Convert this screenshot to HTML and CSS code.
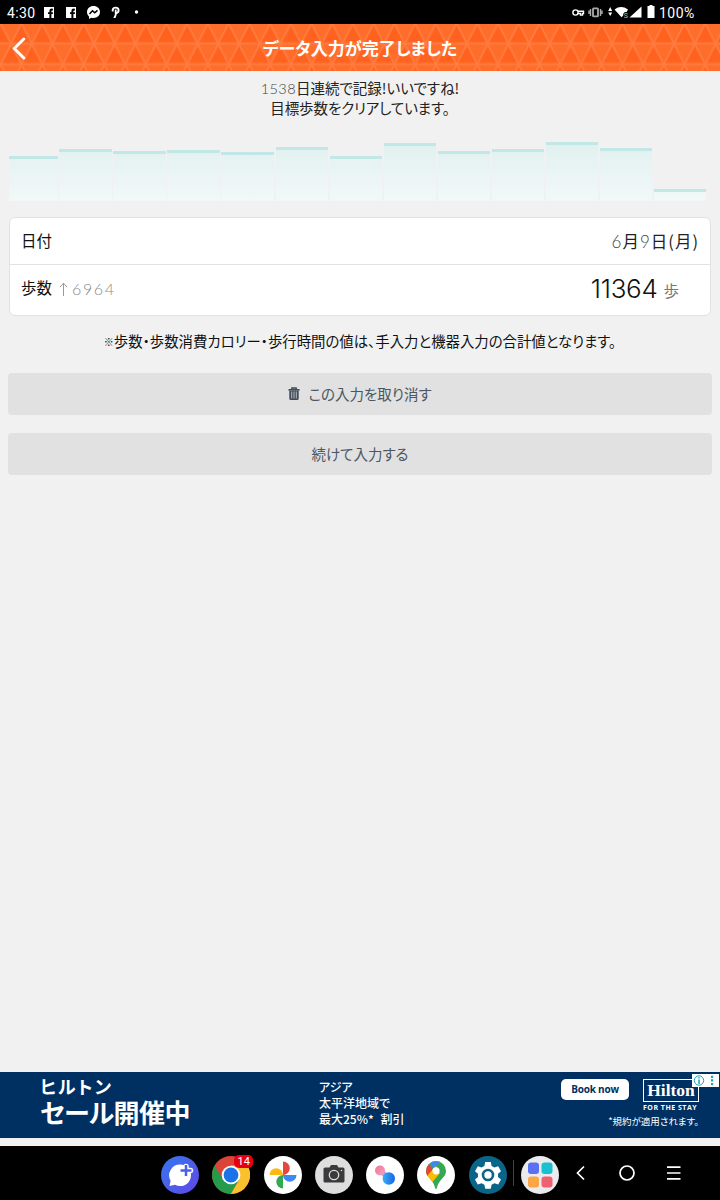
FILE: index.html
```html
<!DOCTYPE html>
<html lang="ja">
<head>
  <meta charset="utf-8">
  <title>データ入力が完了しました</title>
  <link rel="stylesheet" href="styles.css">
</head>
<body>
  <div class="statusbar">
    <span class="clock">4:30</span>
    <svg class="notices" width="100" height="24" viewBox="0 0 100 24">
      <g fill="#fff">
        <path d="M1 7h10v11H8.400v-4h1.500v-1.800H8.400v-1q0-.9 1.500-.8V8.700q-3.500-.5-3.500 2v1.500H5V14h1.400v4H1z"/>
        <path d="M23 7h10v11h-2.600v-4h1.500v-1.800h-1.500v-1q0-.9 1.500-.8V8.700q-3.500-.5-3.500 2v1.500H27V14h1.400v4H23z"/>
        <path d="M50.500 6c-3.700 0-6.500 2.600-6.500 6 0 1.900.8 3.300 2 4.400V19l2.200-1.300c4.800 1.200 8.800-1.600 8.800-5.700 0-3.400-2.800-6-6.500-6z"/>
        <circle cx="93.500" cy="12" r="1.700"/>
      </g>
      <path d="M46.500 14l3-3.200 2.200 2 2.800-2.400" fill="none" stroke="#000" stroke-width="1.500"/>
      <path d="M69.700 11.500V9.800q.3-2.200 3-2.200 2.900 0 2.900 2.700 0 2.800-3 2.900" fill="none" stroke="#fff" stroke-width="1.900"/>
      <path d="M71.800 9.500h1.800V15l-1.100 3h-2.200l1.500-3.200z" fill="#fff"/>
    </svg>
    <svg class="signals" width="86" height="24" viewBox="0 0 86 24">
      <g fill="none" stroke="#fff" stroke-width="1.400">
        <circle cx="4.500" cy="12.500" r="2.600"/>
        <path d="M7 11.300h5.500v2.200h-1v1.600h-2v-1.600H7"/>
      </g>
      <g fill="none" stroke="#aaa">
        <rect x="22" y="8.300" width="5" height="8" rx=".6" stroke-width="1.800"/>
        <path d="M19.500 9v7M29.500 9v7M31 10.500v3.500M18 10.500v3.500" stroke-width="1.400"/>
      </g>
      <path d="M37.200 11l2-4 2 4zM37.200 12.500h4l-2 3.600z" fill="#fff"/>
      <path d="M43.500 9.500q6.500-4.800 13.500 0l-1.500 2.500q-3.500-.5-3.300 3.500l-1.700 1.700z" fill="#fff"/>
      <text class="wifi-mark" x="52.800" y="17.500">S</text>
      <path d="M58.500 17.500l12-11v11z" fill="#fff"/>
      <path d="M76.500 6h2V5h3v1h2v12h-7z" fill="#fff"/>
    </svg>
    <span class="percent">100%</span>
  </div>

  <div class="header">
    <svg class="pattern" width="720" height="47">
      <defs>
        <pattern id="triangles" x="31.800" y="-1" width="20.720" height="41.400" patternUnits="userSpaceOnUse">
          <rect width="20.720" height="41.400" fill="#ff6d2b"/>
          <path d="M2 18.500L10.400 3.800l8.300 14.700z" fill="#ff611e"/>
          <path d="M0 24l8.300 15.200H0zM20.700 24l-8.300 15.200h8.300z" fill="#ff621f"/>
          <path d="M0 20.700h21M0 0h21M0 41.400h21M0 20.700L10.400 0l10.300 20.700-10.300 20.700z" fill="none" stroke="#ff7d42" stroke-width="1.500"/>
        </pattern>
      </defs>
      <rect width="720" height="47" fill="url(#triangles)"/>
    </svg>
    <svg class="back" width="16" height="24" viewBox="0 0 16 24">
      <path d="M12.800 3L3.300 12.500l9.500 9.500" fill="none" stroke="#fff" stroke-width="3" stroke-linecap="round" stroke-linejoin="round"/>
    </svg>
    <h1>データ入力が完了しました</h1>
  </div>

  <div class="message">
    <p><span class="num">1538</span>日連続で記録!いいですね!</p>
    <p class="goal">目標歩数をクリアしています。</p>
  </div>

  <div class="chart">
    <div class="bar first" style="height:45px"></div>
    <div class="bar" style="height:52px"></div>
    <div class="bar" style="height:50px"></div>
    <div class="bar" style="height:51px"></div>
    <div class="bar" style="height:49px"></div>
    <div class="bar" style="height:54px"></div>
    <div class="bar" style="height:45px"></div>
    <div class="bar" style="height:58px"></div>
    <div class="bar" style="height:50px"></div>
    <div class="bar" style="height:52px"></div>
    <div class="bar" style="height:59px"></div>
    <div class="bar" style="height:53px"></div>
    <div class="bar" style="height:12px"></div>
  </div>

  <div class="card">
    <div class="row">
      <span class="label">日付</span>
      <span class="date"><span class="num">6</span>月<span class="num">9</span>日(月)</span>
    </div>
    <div class="row steps">
      <span class="label">歩数</span>
      <svg class="up" width="9" height="15" viewBox="0 0 9 15">
        <path d="M4.500 14V1.200M1 5l3.500-3.800L8 5" fill="none" stroke="#999"/>
      </svg>
      <span class="diff">6964</span>
      <span class="count">11364</span>
      <span class="unit">歩</span>
    </div>
  </div>

  <p class="note"><span class="mark">※</span>歩数・歩数消費カロリー・歩行時間の値は、手入力と機器入力の合計値となります。</p>

  <div class="button">
    <svg class="trash" width="12" height="14" viewBox="0 0 12 14">
      <path d="M3.800 2V1h4.400v1" fill="none" stroke="#3f4b57" stroke-width="1.300"/>
      <path d="M.5 2h11v1.700H.5zM1.300 4h9.400v7.500q0 1.500-1.500 1.500H2.800q-1.500 0-1.500-1.500z" fill="#3f4b57"/>
      <path d="M3.700 4.500v7M6 4.500v7M8.300 4.500v7" stroke="#c5c9cc" stroke-width=".9"/>
    </svg>
    <span class="cancel">この入力を取り消す</span>
  </div>
  <div class="button"><span class="again">続けて入力する</span></div>

  <div class="ad">
    <div class="ad-title">
      <p class="brand">ヒルトン</p>
      <p class="sale">セール開催中</p>
    </div>
    <div class="ad-text">
      <p>アジア</p>
      <p>太平洋地域で</p>
      <p>最大25%* <span class="off">割引</span></p>
    </div>
    <div class="ad-side">
      <div class="ad-top">
        <span class="book">Book now</span>
        <div class="logo">
          <span class="hilton">Hilton</span>
          <span class="stay">FOR THE STAY</span>
        </div>
      </div>
      <p class="terms">*規約が適用されます。</p>
    </div>
    <svg class="adchoices" width="27" height="13" viewBox="0 0 27 13">
      <path d="M0 0h27v13H0z" fill="#fff"/>
      <g fill="#16a6bd">
        <circle cx="7" cy="6.500" r="4.700" fill="none" stroke="#16a6bd"/>
        <path d="M6.300 5.500h1.500V10H6.300zM6.300 3.200h1.500v1.400H6.300zM19 1.800h2.200V4H19zM19 5.300h2.200v2.200H19zM19 9h2.200v2.200H19z"/>
      </g>
    </svg>
  </div>

  <div class="dock">
    <div class="apps">
      <svg width="38" height="38" viewBox="0 0 38 38">
        <defs><linearGradient id="msg" x2="1" y2="1"><stop stop-color="#3478ee"/><stop offset="1" stop-color="#6246e5"/></linearGradient></defs>
        <circle cx="19" cy="19" r="19" fill="url(#msg)"/>
        <path d="M19 8.500a10.800 10.800 0 0 0-9.400 16.200L8.500 30l5.600-1.200A10.800 10.800 0 1 0 19 8.500z" fill="#fff"/>
        <path d="M25 10.500v9M20.500 14.500h9" stroke="#fff" stroke-width="5.500" stroke-linecap="round"/>
        <path d="M25 9v11M19.500 14.500h11" stroke="#4960e8" stroke-width="2.500"/>
      </svg>
      <div class="chrome">
        <svg width="38" height="38" viewBox="0 0 38 38">
          <circle cx="19" cy="19" r="19" fill="#db4437"/>
          <path d="M2.600 9.500A19 19 0 0 0 18.800 38l8.300-14.200L19 19l-8 4.600z" fill="#259b4b"/>
          <path d="M35.500 9.500A19 19 0 0 1 18.800 38l8.400-14.300L19 9.500z" fill="#fbc02d"/>
          <circle cx="19" cy="19" r="9.300" fill="#fff"/>
          <circle cx="19" cy="19" r="7.400" fill="#1a73e8"/>
        </svg>
        <span class="badge">14</span>
      </div>
      <svg width="38" height="38" viewBox="0 0 38 38">
        <circle cx="19" cy="19" r="19" fill="#fff"/>
        <path d="M19 5.500a6.700 6.700 0 0 1 0 13.500z" fill="#e8453c"/>
        <path d="M32.500 19A6.700 6.700 0 0 1 19 19z" fill="#4285f4"/>
        <path d="M19 32.500A6.700 6.700 0 0 1 19 19z" fill="#34a853"/>
        <path d="M5.500 19A6.700 6.700 0 0 1 19 19z" fill="#fbb915"/>
      </svg>
      <svg width="38" height="38" viewBox="0 0 38 38">
        <circle cx="19" cy="19" r="19" fill="#dedede"/>
        <path d="M10 11.500h4.500L16 9h6l1.500 2.500H28q1.500 0 1.500 1.500v12q0 1.500-1.500 1.500H10q-1.500 0-1.500-1.500V13q0-1.500 1.500-1.500z" fill="#3a3a3c"/>
        <circle cx="19" cy="19" r="4.700" fill="none" stroke="#ddd" stroke-width="1.300"/>
        <circle cx="26.500" cy="14.500" r=".8" fill="#ddd"/>
      </svg>
      <svg width="38" height="38" viewBox="0 0 38 38">
        <defs>
          <linearGradient id="pink" x2="1" y2="1"><stop stop-color="#f0758f"/><stop offset="1" stop-color="#f2a3c6"/></linearGradient>
          <linearGradient id="blue"><stop stop-color="#3caef2"/><stop offset="1" stop-color="#1465e8"/></linearGradient>
        </defs>
        <circle cx="19" cy="19" r="19" fill="#fff"/>
        <path d="M18.500 14l-3 5 4 4 5-6q-5 1-6-3z" fill="#b59ade"/>
        <circle cx="14" cy="14.500" r="5" fill="url(#pink)"/>
        <circle cx="22.800" cy="22.500" r="6.200" fill="url(#blue)"/>
      </svg>
      <svg width="38" height="38" viewBox="0 0 38 38">
        <defs><clipPath id="pin"><path d="M19 5a10 10 0 0 0-10 10c0 6.500 7 8 9 16.500q1 3 2 0C22 23 29 21.500 29 15A10 10 0 0 0 19 5z"/></clipPath></defs>
        <circle cx="19" cy="19" r="19" fill="#fff"/>
        <g clip-path="url(#pin)">
          <path d="M0 0h38v38H0z" fill="#34a853"/>
          <path d="M8 21.500L30-1H14l-3 7 8 8z" fill="#4285f4"/>
          <path d="M5 5l6 2 6 8-8 7z" fill="#ea4335"/>
          <path d="M8 22l11-12 4 7-10 12z" fill="#fbbc04"/>
        </g>
        <circle cx="19" cy="14.800" r="3.600" fill="#fff"/>
      </svg>
      <svg width="38" height="38" viewBox="0 0 38 38">
        <circle cx="19" cy="19" r="19" fill="#0b6588"/>
        <path d="M16.200 6h5.600l.8 4 2.800 1.600 3.800-1.300 2.800 4.900-3 2.600v3.200l3 2.600-2.800 4.900-3.800-1.300-2.800 1.600-.8 4h-5.600l-.8-4-2.800-1.600-3.800 1.300L6 23.600 9 21v-3.200l-3-2.600 2.800-4.900 3.800 1.300 2.800-1.600z" fill="#fff"/>
        <circle cx="19" cy="19" r="5" fill="#fff" stroke="#0b6588" stroke-width="2.600"/>
      </svg>
    </div>
    <div class="divider"></div>
    <svg class="drawer" width="38" height="38" viewBox="0 0 38 38">
      <circle cx="19" cy="19" r="19" fill="#ebebee"/>
      <rect x="7" y="6.500" width="11" height="11.500" rx="3" fill="#5c70f4"/>
      <rect x="20.500" y="6.500" width="11" height="11.500" rx="3" fill="#1bc0d0"/>
      <rect x="7" y="20.500" width="11" height="11" rx="3" fill="#fca744"/>
      <rect x="20.500" y="20.500" width="11" height="11" rx="3" fill="#ef6070"/>
    </svg>
    <svg class="nav" width="110" height="20" viewBox="0 0 110 20">
      <g fill="none" stroke="#fff" stroke-width="1.700">
        <path d="M8 3.500L1.500 10 8 16.500"/>
        <circle cx="51" cy="10" r="7"/>
        <path d="M91 4.200h13.500M91 10h13.500M91 15.800h13.500"/>
      </g>
    </svg>
  </div>
</body>
</html>
```
FILE: styles.css
```css
body {
  display: flex;
  flex-direction: column;
  height: 1200px;
  margin: 0;
  overflow: hidden;
  font-family: "Noto Sans CJK JP", sans-serif;
  font-feature-settings: "palt";
  color: #222;
  background-color: #f1f1f1;
}

p, h1 {
  margin: 0;
  white-space: nowrap;
}

svg {
  display: block;
  flex: none;
}

.num {
  font-family: Lato, sans-serif;
  font-weight: 300;
  color: #444;
}

/* android status bar */
.statusbar {
  display: flex;
  flex: none;
  align-items: center;
  height: 24px;
  padding-left: 7px;
  font-family: Roboto, sans-serif;
  font-size: 14px;
  line-height: 26px;
  color: #fff;
  background-color: #000;
}

.clock {
  width: 36px;
  padding-top: 1px;
  letter-spacing: 0.4px;
}

.signals {
  margin-left: 428px;
}

.percent {
  margin-left: 2px;
  padding-top: 1px;
  letter-spacing: 0.5px;
}

.wifi-mark {
  font-family: Roboto, sans-serif;
  font-size: 7px;
  fill: #bbb;
}

.header {
  display: grid;
  flex: none;
  height: 47px;
  align-items: center;
}

.header > * {
  grid-area: 1 / 1;
}

.header .back {
  margin-left: 11px;
}

.header h1 {
  text-align: center;
  font-size: 17px;
  line-height: 24px;
  font-weight: 700;
  color: #fff;
}

.message {
  height: 55px;
  padding-top: 7px;
  text-align: center;
  font-size: 14.5px;
  line-height: 20px;
}

.message .num {
  letter-spacing: 0.4px;
}

.message p:first-child {
  height: 19.5px;
}

.goal {
  letter-spacing: -0.1px;
}

.chart {
  display: flex;
  flex: none;
  align-items: flex-end;
  gap: 1.7px;
  height: 68px;
  margin-left: 9px;
}

.bar {
  box-sizing: border-box;
  width: 52.4px;
  border-top: 3px solid #c1e8e6;
  background: linear-gradient(to top, #f2f8f8, #e0f1f0 58px);
}

.bar.first {
  width: 48.5px;
}

.card {
  margin: 16px 9px 0;
  border: 1px solid #e2e2e2;
  border-radius: 6px;
  background-color: #fff;
}

.row {
  display: flex;
  align-items: center;
  height: 46px;
  padding: 0 11px;
}

.label {
  padding-bottom: 2px;
  font-size: 15.5px;
  color: #111;
}

.date {
  margin-left: auto;
  padding-bottom: 1px;
  font-size: 16.5px;
  letter-spacing: 1px;
}

.date .num {
  font-size: 17px;
}

.row.steps {
  height: 50px;
  border-top: 1px solid #e2e2e2;
}

.steps .label {
  padding-bottom: 6px;
}

.up {
  margin: 0 0 2px 7px;
}

.diff {
  margin-left: 4px;
  padding-bottom: 3px;
  font-family: Lato, sans-serif;
  font-weight: 300;
  font-size: 16px;
  letter-spacing: 1.6px;
  color: #888;
}

.count {
  margin-left: auto;
  padding-bottom: 3px;
  font-family: Inter, sans-serif;
  font-weight: 300;
  font-size: 26px;
  letter-spacing: -0.3px;
  color: #111;
}

.unit {
  margin: 0 20px 1px 6px;
  font-size: 15.5px;
  color: #777;
}

.note {
  margin: 14px 0 22px;
  text-align: center;
  font-size: 14.4px;
  line-height: 21px;
  color: #111;
}

.mark {
  font-size: 10px;
  line-height: 1;
  vertical-align: 1px;
}

.button {
  display: flex;
  flex: none;
  align-items: center;
  justify-content: center;
  gap: 8px;
  height: 42px;
  margin: 0 8px 18px;
  border-radius: 4px;
  font-size: 14.5px;
  color: #4a5763;
  background-color: #e1e1e1;
}

.button span {
  padding-bottom: 2px;
}

/* banner */
.ad {
  position: relative;
  display: flex;
  flex: none;
  box-sizing: border-box;
  height: 66px;
  margin-top: auto;
  padding: 0 21px 0 40px;
  color: #fff;
  background-color: #002f61;
}

.ad-title {
  width: 279px;
  padding-top: 3px;
  font-weight: 700;
}

.brand {
  font-size: 18px;
  line-height: 22px;
  letter-spacing: 2px;
}

.sale {
  font-size: 26px;
  line-height: 30px;
  letter-spacing: -0.6px;
}

.ad-text {
  padding-top: 7px;
  font-size: 12px;
  line-height: 16px;
  font-weight: 500;
}

.off {
  margin-left: 4px;
}

.ad-side {
  margin-left: auto;
  padding-top: 7px;
}

.ad-top {
  display: flex;
  gap: 14px;
}

.book {
  width: 68px;
  height: 21px;
  border-radius: 5px;
  text-align: center;
  font-family: "Open Sans", sans-serif;
  font-size: 10px;
  line-height: 21px;
  font-weight: 700;
  letter-spacing: -0.2px;
  color: #002f61;
  background-color: #fff;
}

.logo {
  display: flex;
  flex-direction: column;
  width: 56px;
}

.hilton {
  box-sizing: border-box;
  height: 23px;
  border: 1px solid #fff;
  text-align: center;
  font-family: "Liberation Serif", serif;
  font-size: 17.5px;
  line-height: 21px;
  font-weight: 700;
}

.stay {
  margin-top: 1px;
  font-family: "Open Sans", sans-serif;
  font-size: 7px;
  line-height: 9px;
  font-weight: 700;
  letter-spacing: 0.5px;
  white-space: nowrap;
}

.terms {
  margin-top: 3px;
  text-align: right;
  font-size: 9.5px;
  line-height: 13px;
}

.adchoices {
  position: absolute;
  top: 2px;
  right: 1px;
}

/* dock */
.dock {
  display: flex;
  flex: none;
  align-items: center;
  box-sizing: border-box;
  height: 54px;
  margin-top: 8px;
  padding: 3px 0 0 161px;
  background-color: #000;
}

.apps {
  display: flex;
  gap: 13.3px;
}

.chrome {
  position: relative;
}

.badge {
  position: absolute;
  top: -1px;
  right: -3px;
  width: 19px;
  height: 13px;
  border-radius: 5px;
  text-align: center;
  font-family: Roboto, sans-serif;
  font-size: 11px;
  line-height: 13px;
  color: #fff;
  background-color: #e60012;
}

.divider {
  width: 1px;
  height: 26px;
  margin: 0 7px 4px 6px;
  background-color: #444;
}

.nav {
  margin: 0 0 3px 17px;
}
```
